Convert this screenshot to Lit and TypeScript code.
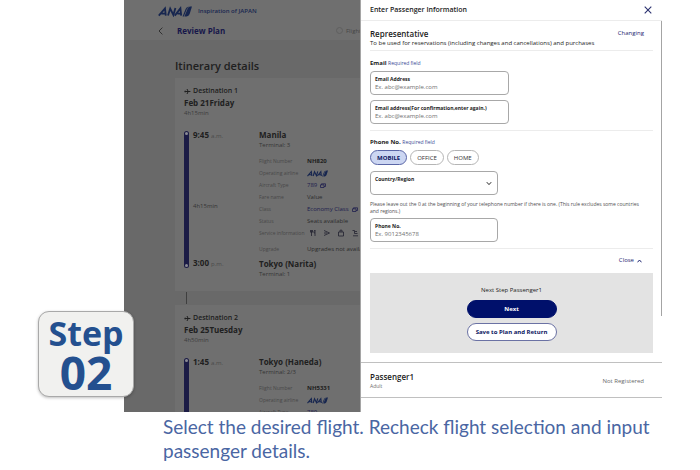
import { LitElement, html, css, svg, nothing } from "lit";
import { customElement, property, state } from "lit/decorators.js";
import { classMap } from "lit/directives/class-map.js";

const anaLogo = html`<svg class="ana" viewBox="0 0 34 11" role="img" aria-label="ANA">
  <g fill="none" stroke="currentColor" stroke-width="1.8">
    <path d="M0.8 9.6 L7 2.4 L7.8 9.6 M3.4 7.6 H7.6" />
    <path d="M10 9.6 L12.2 2.6 L15.4 9 L17.4 2" />
    <path d="M16.8 9.6 L22.4 2.4 L23.2 9.6 M19.4 7.6 H23" />
  </g>
  <path d="M26.4 10.4 L29.8 2.2 Q30.6 0.5 32.2 0.5 H34 L31.6 8 Q30.8 10.4 28.6 10.4 Z" fill="currentColor" />
  <path d="M24.6 10.4 L27.6 3 Q28.6 0.5 31 0.5 Q29.6 1.2 29 2.8 L25.8 10.4 Z" fill="currentColor" />
</svg>`;

const windowIcon = html`<svg class="win" viewBox="0 0 6 5"><path d="M0.5 1.8h3.5v2.7H0.5zM1.5 1.8v-1h4v2.7H4" fill="none" stroke="#20204e" stroke-width="0.8" /></svg>`;

const serviceIcons = [
  svg`<path d="M1.5 1v2.2h2V1M2.5 1v6M6 7V1q-1.2 1-1 3h1" />`,
  svg`<path d="M1 1.5L6.5 4 1 6.5M1 4h3" />`,
  svg`<path d="M1.5 3h5v4h-5zM3 3V1.2h2V3" />`,
  svg`<path d="M1.5 1.5h2v3h3M2 6.8h5M4 2.5h2" />`,
];

interface Flight {
  title: string;
  date: string;
  total: string;
  depart: string;
  from: string;
  fromTerminal: string;
  number: string;
  landing?: { time: string; place: string; terminal: string };
}

const flights: Flight[] = [
  {
    title: "Destination 1", date: "Feb 21Friday", total: "4h15min",
    depart: "9:45", from: "Manila", fromTerminal: "Terminal: 3", number: "NH820",
    landing: { time: "3:00", place: "Tokyo (Narita)", terminal: "Terminal: 1" },
  },
  {
    title: "Destination 2", date: "Feb 25Tuesday", total: "4h50min",
    depart: "1:45", from: "Tokyo (Haneda)", fromTerminal: "Terminal: 2/3", number: "NH5331",
  },
];

@customElement("flight-card")
export class FlightCard extends LitElement {
  @property({ attribute: false }) flight!: Flight;

  static styles = css`
    :host { display: block; background: #6f6f6f; color: #202020; padding: 8px 0 13px 9px; white-space: nowrap; }
    .dest { display: flex; align-items: center; gap: 2px; font-size: 7px; line-height: 10px; font-weight: 600; }
    .plane { width: 7px; height: 7px; }
    .date { font-size: 8px; line-height: 13px; font-weight: 700; }
    .total { font-size: 6px; line-height: 8px; color: #3c3c3c; }
    .leg { display: grid; grid-template-columns: 5px 62px 1fr; margin-top: 12px; column-gap: 4px; min-height: 142px; }
    .bar { background: #1b1b45; border-radius: 3px; display: flex; flex-direction: column; justify-content: space-between; align-items: center; margin: 2px 0 10px; padding: 1px 0; }
    .dot { width: 3px; height: 3px; border-radius: 2px; background: #8a8a94; }
    .times { display: flex; flex-direction: column; justify-content: space-between; padding-bottom: 8px; }
    .time { font-size: 8px; line-height: 12px; font-weight: 700; }
    .half { font-size: 6px; font-weight: 400; color: #4a4a4a; }
    .small { font-size: 6px; line-height: 8px; color: #353535; }
    .mid { padding-top: 12px; }
    .place { font-size: 8px; line-height: 12px; font-weight: 700; }
    .facts { display: grid; grid-template-columns: 48px 1fr; grid-auto-rows: minmax(12px, auto); align-items: center; margin: 6px 0 5px; font-size: 6px; line-height: 8px; }
    dt { color: #484848; font-size: 5px; }
    dd { margin: 0; display: flex; align-items: center; gap: 3px; color: #2c2c2c; }
    .last { padding-top: 6px; }
    .strong { font-weight: 700; color: #202020; }
    .link { color: #20204e; }
    .ana { width: 21px; height: 7px; color: #17264f; }
    .win { width: 6px; height: 5px; }
    .icons { gap: 6px; padding-left: 2px; }
    .ico { width: 8px; height: 8px; fill: none; stroke: #222230; stroke-width: 0.8; flex: none; }
  `;

  render() {
    const f = this.flight;
    const l = f.landing;
    return html`
      <div class="dest">
        <svg class="plane" viewBox="0 0 7 7"><path d="M0.6 3.5h5.8M1.2 2.6v1.8M3 1L4.2 3.5 3 6" stroke="#202020" fill="none" /></svg>
        ${f.title}
      </div>
      <div class="date">${f.date}</div>
      <div class="total">${f.total}</div>
      <div class="leg">
        <div class="bar"><span class="dot"></span><span class="dot"></span></div>
        <div class="times">
          <div class="time">${f.depart} <span class="half">a.m.</span></div>
          ${l ? html`
            <div class="small mid">${f.total}</div>
            <div class="time">${l.time} <span class="half">p.m.</span></div>` : nothing}
        </div>
        <div>
          <div class="place">${f.from}</div>
          <div class="small">${f.fromTerminal}</div>
          <dl class="facts">
            <dt>Flight Number</dt><dd class="strong">${f.number}</dd>
            <dt>Operating airline</dt><dd>${anaLogo}</dd>
            <dt>Aircraft Type</dt><dd class="link">789 ${l ? windowIcon : nothing}</dd>
            ${l ? html`
              <dt>Fare name</dt><dd>Value</dd>
              <dt>Class</dt><dd class="link">Economy Class ${windowIcon}</dd>
              <dt>Status</dt><dd>Seats available</dd>
              <dt>Service information</dt>
              <dd class="icons">${serviceIcons.map((i) => html`<svg class="ico" viewBox="0 0 8 8">${i}</svg>`)}</dd>
              <dt class="last">Upgrade</dt><dd class="last">Upgrades not available</dd>` : nothing}
          </dl>
          ${l ? html`
            <div class="place">${l.place}</div>
            <div class="small">${l.terminal}</div>` : nothing}
        </div>
      </div>
    `;
  }
}

@customElement("plan-page")
export class PlanPage extends LitElement {
  static styles = css`
    :host { display: block; contain: size; overflow: hidden; background: #696969; color: #202020; }
    .head { background: #6f6f6f; padding: 5px 0 1px 34px; white-space: nowrap; }
    .brand { display: flex; align-items: center; gap: 6px; font-size: 6px; line-height: 12px; font-weight: 600; color: #17264f; }
    .ana { width: 34px; height: 11px; }
    .nav { display: flex; align-items: center; margin-top: 5px; height: 17px; }
    .back { border: 0; background: none; padding: 0; width: 19px; height: 12px; display: flex; align-items: center; }
    .arrow { width: 5px; height: 8px; }
    .title { margin: 0; font-size: 8px; line-height: 12px; font-weight: 700; color: #17174a; }
    .step { margin-left: auto; display: flex; gap: 3px; align-items: center; font-size: 6px; color: #454545; width: 24px; }
    .num { border: 1px solid #5f5f5f; border-radius: 4px; width: 5px; height: 5px; flex: none; }
    .body { padding: 18px 0 0 51px; }
    .h { margin: 0 0 4px; font-size: 11px; line-height: 16px; font-weight: 600; }
    .link { width: 1px; height: 12px; margin: 1px 0 1px 11px; background: #3f3f3f; }
  `;

  render() {
    return html`
      <header class="head">
        <div class="brand">${anaLogo}<span>Inspiration of JAPAN</span></div>
        <div class="nav">
          <button class="back" aria-label="Back">
            <svg class="arrow" viewBox="0 0 5 8"><path d="M4.4 0.6L1 4l3.4 3.4" fill="none" stroke="#222" stroke-width="0.8" /></svg>
          </button>
          <h1 class="title">Review Plan</h1>
          <div class="step"><span class="num"></span>Flights</div>
        </div>
      </header>
      <div class="body">
        <h2 class="h">Itinerary details</h2>
        ${flights.map((f, i) => html`
          ${i ? html`<div class="link"></div>` : nothing}
          <flight-card .flight=${f}></flight-card>
        `)}
      </div>
    `;
  }
}

@customElement("passenger-drawer")
export class PassengerDrawer extends LitElement {
  @state() private kind = "MOBILE";

  static styles = css`
    :host { display: block; background: #fff; color: #1c1c1c; border-left: 1px solid #a5a5a5; padding-bottom: 14px; }
    button { font-family: inherit; cursor: pointer; }
    .top { display: flex; justify-content: space-between; align-items: center; height: 20px; padding: 0 10px 0 9px; border-bottom: 1px solid #ececec; }
    .name { margin: 0; font-size: 7px; line-height: 10px; font-weight: 600; }
    .x { border: 0; background: none; padding: 0; width: 8px; height: 8px; display: flex; }
    .x svg { width: 8px; height: 8px; }
    .main { padding: 0 9px; position: relative; }
    .thumb { position: absolute; right: 0; top: 0; width: 1px; height: 295px; background: #a4a4a4; }
    .rep { display: flex; justify-content: space-between; align-items: flex-start; padding: 7px 9px 2px 0; border-bottom: 1px solid #ececec; }
    .h { margin: 0; font-size: 8px; line-height: 11px; font-weight: 600; }
    .sub { margin: 0; font-size: 6px; line-height: 9px; }
    .textbtn { border: 0; background: none; padding: 0; font-size: 6px; line-height: 11px; font-weight: 500; color: #1d2470; display: flex; align-items: center; gap: 3px; }
    .group { border-bottom: 1px solid #ececec; padding: 7px 0 6px; display: flex; flex-direction: column; align-items: flex-start; }
    .group + .group { padding-top: 6px; }
    .legend { margin: 0 0 3px; font-size: 6px; line-height: 10px; font-weight: 700; }
    .req { font-size: 5px; font-weight: 500; color: #3a4a94; }
    .field { position: relative; box-sizing: border-box; width: 139px; height: 24px; border: 1px solid #a8a8a8; border-radius: 4px; padding: 3px 4px; display: flex; flex-direction: column; }
    .field + .field { margin-top: 5px; }
    .narrow { width: 128px; }
    .field label { font-size: 5px; line-height: 8px; font-weight: 700; white-space: nowrap; }
    .field input, .field select { border: 0; padding: 0; margin: 0; background: none; outline: 0; font: 6px/9px "Open Sans", sans-serif; height: 9px; width: 100%; color: #1c1c1c; appearance: none; }
    .field input::placeholder { color: #707070; opacity: 1; }
    .chev { position: absolute; right: 5px; top: 9px; width: 6px; height: 5px; pointer-events: none; }
    .chips { display: flex; gap: 3px; margin-bottom: 6px; }
    .chip { box-sizing: border-box; height: 15px; border: 1px solid #b5b5b5; border-radius: 8px; background: #fff; padding: 0 6px; font-size: 6px; line-height: 12px; font-weight: 500; color: #333; }
    .chip.on { background: #ccd6f2; border-color: #5a66a6; color: #0b1560; font-weight: 700; }
    .note { margin: 6px 0 3px; padding-right: 9px; font-size: 5px; line-height: 7px; color: #505050; }
    .close { display: flex; justify-content: flex-end; padding: 6px 11px 7px 0; }
    .up { width: 5px; height: 4px; }
    .box { background: #e3e3e3; padding: 12px 0; display: flex; flex-direction: column; align-items: center; gap: 5px; }
    .next { margin: 0; font-size: 6px; line-height: 10px; }
    .btn { box-sizing: border-box; width: 90px; height: 18px; border: 1px solid #00106b; border-radius: 9px; background: #00106b; color: #fff; font-size: 6px; line-height: 10px; font-weight: 700; padding: 0; }
    .btn.alt { background: #fff; color: #0b1560; border-color: #6b72a4; }
    .pax { display: flex; justify-content: space-between; align-items: center; margin-top: 9px; border: 1px solid #c0c0c0; border-width: 1px 0; padding: 8px 18px 7px 9px; }
    .muted { margin: 0; font-size: 6px; line-height: 8px; color: #6a6a6a; }
    .small { font-size: 5px; }
  `;

  render() {
    return html`
      <header class="top">
        <h2 class="name">Enter Passenger Information</h2>
        <button class="x" aria-label="Close dialog">
          <svg viewBox="0 0 8 8"><path d="M0.7 0.7l6.6 6.6M7.3 0.7L0.7 7.3" stroke="#2c3270" stroke-width="1.1" /></svg>
        </button>
      </header>
      <div class="main">
        <div class="thumb"></div>
        <div class="rep">
          <div>
            <h3 class="h">Representative</h3>
            <p class="sub">To be used for reservations (including changes and cancellations) and purchases</p>
          </div>
          <button class="textbtn">Changing</button>
        </div>
        <section class="group">
          <h4 class="legend">Email <span class="req">Required field</span></h4>
          <div class="field"><label for="mail">Email Address</label><input id="mail" type="email" placeholder="Ex. abc@example.com" /></div>
          <div class="field"><label for="mail2">Email address(For confirmation,enter again.)</label><input id="mail2" type="email" placeholder="Ex. abc@example.com" /></div>
        </section>
        <section class="group">
          <h4 class="legend">Phone No. <span class="req">Required field</span></h4>
          <div class="chips">
            ${["MOBILE", "OFFICE", "HOME"].map((k) => html`
              <button class=${classMap({ chip: true, on: k === this.kind })}
                aria-pressed=${k === this.kind} @click=${() => (this.kind = k)}>${k}</button>`)}
          </div>
          <div class="field narrow">
            <label for="country">Country/Region</label>
            <select id="country"><option></option></select>
            <svg class="chev" viewBox="0 0 6 5"><path d="M0.8 1.2L3 3.6l2.2-2.4" fill="none" stroke="#222" /></svg>
          </div>
          <p class="note">Please leave out the 0 at the beginning of your telephone number if there is one. (This rule excludes some countries and regions.)</p>
          <div class="field narrow"><label for="tel">Phone No.</label><input id="tel" type="tel" placeholder="Ex. 9012345678" /></div>
        </section>
        <div class="close">
          <button class="textbtn">Close
            <svg class="up" viewBox="0 0 5 4"><path d="M0.5 3.3L2.5 1l2 2.3" fill="none" stroke="#1d2470" /></svg>
          </button>
        </div>
        <div class="box">
          <p class="next">Next Step Passenger1</p>
          <button class="btn">Next</button>
          <button class="btn alt">Save to Plan and Return</button>
        </div>
      </div>
      <section class="pax">
        <div>
          <h3 class="h">Passenger1</h3>
          <p class="muted small">Adult</p>
        </div>
        <p class="muted">Not Registered</p>
      </section>
    `;
  }
}

@customElement("app-root")
export class AppRoot extends LitElement {
  static styles = css`
    :host { display: block; background: #fff; font-family: "Open Sans", sans-serif; }
    .shot { position: relative; display: grid; grid-template-columns: minmax(0, 1fr) 302px; padding: 0 38px 0 124px; }
    .badge { position: absolute; left: 38px; bottom: 15px; box-sizing: border-box; width: 96px; height: 86px; border: 1px solid #a9a9a9; border-radius: 11px; background: #f1f1ef; box-shadow: 0 1px 3px #00000040; color: #24508f; font-weight: 700; text-align: center; display: flex; flex-direction: column; }
    .word { font-size: 34px; line-height: 42px; }
    .num { font-size: 46px; line-height: 36px; }
    .caption { margin: 3px 38px 0 163px; font-family: Lato, "Open Sans", sans-serif; font-size: 19px; line-height: 24px; color: #4a66a3; }
  `;

  render() {
    return html`
      <main>
        <div class="shot">
          <plan-page></plan-page>
          <passenger-drawer></passenger-drawer>
          <div class="badge"><span class="word">Step</span><span class="num">02</span></div>
        </div>
        <p class="caption">Select the desired flight. Recheck flight selection and input passenger details.</p>
      </main>
    `;
  }
}
